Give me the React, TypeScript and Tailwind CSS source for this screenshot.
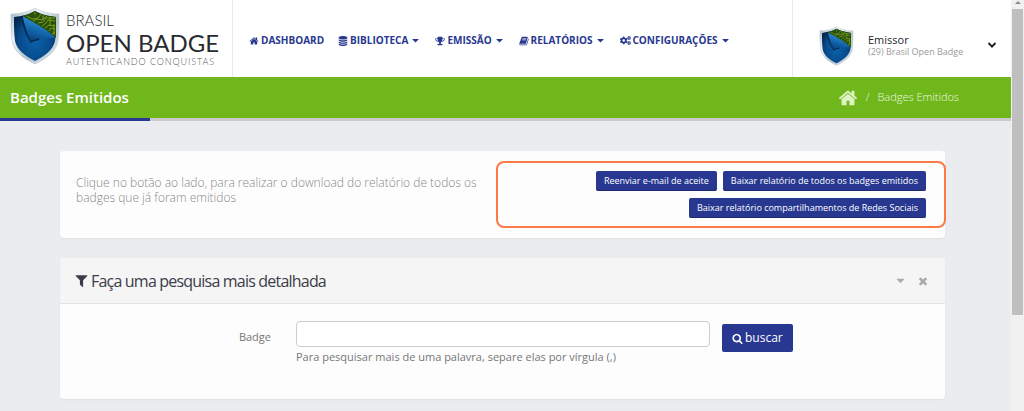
import React, { useState } from 'react';
import { FaCogs } from 'react-icons/fa';

interface IconProps {
    path: string;
    className?: string;
}

const icons = {
    home: 'M1472 992v480q0 26-19 45t-45 19h-384v-384h-256v384h-384q-26 0-45-19t-19-45v-480q0-1 .5-3t.5-3l575-474 575 474q1 2 1 6zm223-69l-62 74q-8 9-21 11h-3q-13 0-21-7l-692-577-692 577q-12 8-24 7-13-2-21-11l-62-74q-8-10-7-23.5t11-21.5l719-599q32-26 76-26t76 26l244 204v-195q0-14 9-23t23-9h192q14 0 23 9t9 23v408l219 182q10 8 11 21.5t-7 23.5z',
    database: 'M896 768q237 0 443-43t325-127v170q0 69-103 128t-280 93.5-385 34.5-385-34.5-280-93.5-103-128v-170q119 84 325 127t443 43zm0 768q237 0 443-43t325-127v170q0 69-103 128t-280 93.5-385 34.5-385-34.5-280-93.5-103-128v-170q119 84 325 127t443 43zm0-384q237 0 443-43t325-127v170q0 69-103 128t-280 93.5-385 34.5-385-34.5-280-93.5-103-128v-170q119 84 325 127t443 43zm0-1152q208 0 385 34.5t280 93.5 103 128v128q0 69-103 128t-280 93.5-385 34.5-385-34.5-280-93.5-103-128v-128q0-69 103-128t280-93.5 385-34.5z',
    trophy: 'M522 883q-74-162-74-371h-256v96q0 78 94.5 162t235.5 113zm1078-275v-96h-256q0 209-74 371 141-29 235.5-113t94.5-162zm128-128v128q0 71-41.5 143t-112 130-173 97.5-215.5 44.5q-42 54-95 95-38 34-52.5 72.5t-14.5 89.5q0 54 30.5 91t97.5 37q75 0 133.5 45.5t58.5 114.5v64q0 14-9 23t-23 9h-832q-14 0-23-9t-9-23v-64q0-69 58.5-114.5t133.5-45.5q67 0 97.5-37t30.5-91q0-51-14.5-89.5t-52.5-72.5q-53-41-95-95-113-5-215.5-44.5t-173-97.5-112-130-41.5-143v-128q0-40 28-68t68-28h288v-96q0-66 47-113t113-47h576q66 0 113 47t47 113v96h288q40 0 68 28t28 68z',
    book: 'M1703 478q40 57 18 129l-275 906q-19 64-76.5 107.5t-122.5 43.5h-923q-77 0-148.5-53.5t-99.5-131.5q-24-67-2-127 0-4 3-27t4-37q1-8-3-21.5t-3-19.5q2-11 8-21t16.5-23.5 16.5-23.5q23-38 45-91.5t30-91.5q3-10 .5-30t-.5-28q3-11 17-28t17-23q21-36 42-92t25-90q1-9-2.5-32t.5-28q4-13 22-30.5t22-22.5q19-26 42.5-84.5t27.5-96.5q1-8-3-25.5t-2-26.5q2-8 9-18t18-23 17-21q8-12 16.5-30.5t15-35 16-36 19.5-32 26.5-23.5 36-11.5 47.5 5.5l-1 3q38-9 51-9h761q74 0 114 56t18 130l-274 906q-36 119-71.5 153.5t-128.5 34.5h-869q-27 0-38 15-11 16-1 43 24 70 144 70h923q29 0 56-15.5t35-41.5l300-987q7-22 5-57 38 15 59 43zm-1064 2q-4 13 2 22.5t20 9.5h608q13 0 25.5-9.5t16.5-22.5l21-64q4-13-2-22.5t-20-9.5h-608q-13 0-25.5 9.5t-16.5 22.5zm-83 256q-4 13 2 22.5t20 9.5h608q13 0 25.5-9.5t16.5-22.5l21-64q4-13-2-22.5t-20-9.5h-608q-13 0-25.5 9.5t-16.5 22.5z',
    caret: 'M1408 704q0 26-19 45l-448 448q-19 19-45 19t-45-19l-448-448q-19-19-19-45t19-45 45-19h896q26 0 45 19t19 45z',
    filter: 'M1595 295q17 41-14 70l-493 493v742q0 42-39 59-13 5-25 5-27 0-45-19l-256-256q-19-19-19-45v-486l-493-493q-31-29-14-70 17-39 59-39h1280q42 0 59 39z',
    times: 'M1490 1322q0 40-28 68l-136 136q-28 28-68 28t-68-28l-294-294-294 294q-28 28-68 28t-68-28l-136-136q-28-28-28-68t28-68l294-294-294-294q-28-28-28-68t28-68l136-136q28-28 68-28t68 28l294 294 294-294q28-28 68-28t68 28l136 136q28 28 28 68t-28 68l-294 294 294 294q28 28 28 68z',
    search: 'M1216 832q0-185-131.5-316.5t-316.5-131.5-316.5 131.5-131.5 316.5 131.5 316.5 316.5 131.5 316.5-131.5 131.5-316.5zm512 832q0 52-38 90t-90 38q-54 0-90-38l-343-342q-179 124-399 124-143 0-273.5-55.5t-225-150-150-225-55.5-273.5 55.5-273.5 150-225 225-150 273.5-55.5 273.5 55.5 225 150 150 225 55.5 273.5q0 220-124 399l343 343q37 37 37 90z',
};

function Icon({ path, className }: IconProps) {
    return (
        <svg viewBox="0 0 1792 1792" fill="currentColor" aria-hidden="true" className={className}>
            <path d={path} />
        </svg>
    );
}

function Shield({ id, className }: { id: string; className?: string }) {
    return (
        <svg viewBox="0 0 50 58" aria-hidden="true" className={className}>
            <defs>
                <linearGradient id={`${id}-rim`} x1="0" y1="0" x2="1" y2="1">
                    <stop offset="0" stopColor="#9db0bb" />
                    <stop offset="0.3" stopColor="#eef4f7" />
                    <stop offset="0.6" stopColor="#b4c5ce" />
                    <stop offset="1" stopColor="#dfe8ed" />
                </linearGradient>
                <radialGradient id={`${id}-blue`} cx="0.5" cy="0.6" r="0.6">
                    <stop offset="0" stopColor="#0a62ad" />
                    <stop offset="0.65" stopColor="#074a8a" />
                    <stop offset="1" stopColor="#05284f" />
                </radialGradient>
                <linearGradient id={`${id}-fold`} x1="0.7" y1="0.2" x2="0.35" y2="1">
                    <stop offset="0" stopColor="#2f97dc" />
                    <stop offset="0.5" stopColor="#1467ae" />
                    <stop offset="1" stopColor="#07407c" />
                </linearGradient>
            </defs>
            <path d="M25 1C18 5 10 7 1 7c0 10 0 19 1 27 2 11 12 18 23 23 11-5 21-12 23-23 1-8 1-17 1-27-9 0-17-2-24-6z" fill={`url(#${id}-rim)`} stroke="#b7c6ce" strokeWidth="0.6" />
            <path d="M25 4C18 8 11 9 4 10c0 8 0 17 1 24 2 9 10 15 20 20 10-5 18-11 20-20 1-7 1-16 1-24-7-1-14-2-21-6z" fill={`url(#${id}-blue)`} />
            <path d="M25 4c-4 2-8 4-13 5L46 31c0-7 0-14 0-21-7-1-14-2-21-6z" fill="#2b4f0c" />
            <g fill="none" stroke="#7da91e" strokeWidth="0.9">
                <path d="M17 9l5 3 6-1 3-4M23 14l4-2 5 1 5-4M28 16l5-1 3-4h9M32 19l4-3 2-3 7 1M35 21l4-3 6 1M39 24l2-3 4 1M42 27l3-2" />
                <path d="M25 5v3M33 8v5M40 10v9M44 17v11" />
            </g>
            <path d="M12 9c11 6 23 12 34 22-8-1-16 1-25 4-3-8-6-17-9-26z" fill={`url(#${id}-fold)`} />
            <path d="M12 9c1 10 4 18 9 26 2-2 6-2 8-3" fill="none" stroke="#062445" strokeWidth="1.4" />
        </svg>
    );
}

const menu = [
    { label: 'DASHBOARD', icon: icons.home, dropdown: false },
    { label: 'BIBLIOTECA', icon: icons.database, dropdown: true },
    { label: 'EMISSÃO', icon: icons.trophy, dropdown: true },
    { label: 'RELATÓRIOS', icon: icons.book, dropdown: true },
    { label: 'CONFIGURAÇÕES', icon: null, dropdown: true },
];

const actionClass = 'h-5 cursor-pointer rounded-xs border-b border-[#1d2870] bg-[#283891] px-2 text-[9px] leading-[18px] text-white hover:bg-[#1f2c78]';

function Header() {
    return (
        <header className="flex h-[77px] items-stretch bg-white">
            <a href="#" className="flex w-[233px] shrink-0 items-start border-r border-[#e9e9ec] pt-[7px] pl-[10px]">
                <Shield id="logo" className="h-[58px] w-[50px] shrink-0" />
                <span className="flex flex-col pt-1 pl-[6px] font-['Lato'] whitespace-nowrap text-[#2b2b2f]">
                    <span className="text-[15px] leading-[18px] font-light">BRASIL</span>
                    <span className="text-[24px] leading-[28px]">OPEN BADGE</span>
                    <span className="text-[9px] leading-[10px] font-light tracking-widest text-[#55555a]">AUTENTICANDO CONQUISTAS</span>
                </span>
            </a>
            <nav className="flex flex-1 items-center gap-[14px] pt-1 pl-4">
                {menu.map((item) => (
                    <a key={item.label} href="#" className="flex items-center gap-[2px] text-[10px] font-bold whitespace-nowrap text-[#283891]">
                        {item.icon ? <Icon path={item.icon} className="size-[10px]" /> : <FaCogs className="size-[11px]" />}
                        {item.label}
                        {item.dropdown && <Icon path={icons.caret} className="size-[11px]" />}
                    </a>
                ))}
            </nav>
            <div className="flex w-[219px] shrink-0 items-center border-l border-[#e9e9ec] pt-[14px] pr-[14px] pl-[26px]">
                <Shield id="user" className="h-10 w-[35px] shrink-0" />
                <div className="flex-1 pl-[14px] whitespace-nowrap">
                    <div className="text-[11px] leading-[13px] text-[#22252d]">Emissor</div>
                    <div className="text-[9px] leading-[12px] text-[#999]">(29) Brasil Open Badge</div>
                </div>
                <button type="button" aria-label="Abrir menu do usuário" className="cursor-pointer">
                    <svg viewBox="0 0 10 10" aria-hidden="true" className="size-[10px]">
                        <path d="M1.5 2l3.5 3.5L8.5 2" fill="none" stroke="#22252d" strokeWidth="2" />
                    </svg>
                </button>
            </div>
        </header>
    );
}

export default function App() {
    const [badge, setBadge] = useState('');

    return (
        <div className="flex min-h-screen bg-[#ebecf0] font-['Open_Sans',sans-serif]">
            <div className="min-w-0 flex-1">
                <Header />

                <div className="flex h-[41px] items-center justify-between bg-[#6fb71b] pr-[52px] pl-[10px] text-white">
                    <h1 className="text-[15px] font-semibold">Badges Emitidos</h1>
                    <div className="flex items-center gap-2 text-[11px] font-light text-[#eef8e0]">
                        <a href="#" aria-label="Início" className="text-[#dff2c6]"><Icon path={icons.home} className="size-5" /></a>
                        <span>/</span>
                        <span>Badges Emitidos</span>
                    </div>
                </div>
                <div className="h-[3px] bg-[#cacacd]">
                    <div className="h-full w-[150px] bg-[#283891]"></div>
                </div>

                <main className="flex flex-col gap-5 pt-[30px] pr-[66px] pb-3 pl-[60px]">
                    <section className="flex items-start justify-between rounded-sm bg-[#fdfdfd] py-[10px] pl-4 shadow-xs">
                        <p className="w-[410px] pt-[14px] text-[12px] leading-[15px] font-light text-[#888]">
                            Clique no botão ao lado, para realizar o download do relatório de todos os badges que já foram emitidos
                        </p>
                        <div className="-mr-px flex w-[450px] flex-wrap justify-end gap-x-[6px] gap-y-[7px] rounded-lg border-2 border-[#fb7a48] px-[18px] py-2">
                            <button type="button" className={actionClass}>Reenviar e-mail de aceite</button>
                            <button type="button" className={actionClass}>Baixar relatório de todos os badges emitidos</button>
                            <button type="button" className={actionClass}>Baixar relatório compartilhamentos de Redes Sociais</button>
                        </div>
                    </section>

                    <section className="rounded-sm bg-[#fdfdfd] shadow-xs">
                        <div className="flex h-[46px] items-center justify-between rounded-t-sm border-b border-[#e2e2e2] bg-[#f5f5f5] pr-4 pl-[14px]">
                            <h2 className="flex items-center gap-[2px] text-base tracking-tighter text-[#3b3c48]">
                                <Icon path={icons.filter} className="size-[15px]" />
                                Faça uma pesquisa mais detalhada
                            </h2>
                            <div className="flex items-center gap-[10px] text-[#aaa]">
                                <button type="button" aria-label="Recolher" className="cursor-pointer"><Icon path={icons.caret} className="size-[13px]" /></button>
                                <button type="button" aria-label="Fechar" className="cursor-pointer"><Icon path={icons.times} className="size-3" /></button>
                            </div>
                        </div>
                        <form className="flex items-start pt-[17px] pb-[34px] text-[#777]" onSubmit={(e) => e.preventDefault()}>
                            <label htmlFor="badge" className="w-[211px] pt-2 text-right text-[11px] leading-[16px]">Badge</label>
                            <div className="ml-[25px] w-[414px]">
                                <input
                                    id="badge"
                                    type="text"
                                    value={badge}
                                    onChange={(e) => setBadge(e.target.value)}
                                    className="block h-[26px] w-full rounded-sm border border-[#ccc] bg-white px-2 text-[11px] outline-none focus:border-[#283891]"
                                />
                                <p className="pt-[2px] text-[11px] leading-[16px]">Para pesquisar mais de uma palavra, separe elas por vírgula (,)</p>
                            </div>
                            <button type="submit" className="mt-[3px] ml-3 flex h-7 cursor-pointer items-center gap-[2px] rounded-xs bg-[#283891] px-[10px] text-[12px] text-white hover:bg-[#1f2c78]">
                                <Icon path={icons.search} className="size-[11px]" />
                                buscar
                            </button>
                        </form>
                    </section>
                </main>
            </div>

            {/* trilho de rolagem */}
            <div aria-hidden="true" className="w-[13px] shrink-0 bg-[#f1f1f1]">
                <svg viewBox="0 0 13 9" className="h-[9px] w-full"><path d="M4 4l3-3 3 3z" fill="#8a8a8a" /></svg>
                <div className="mx-px h-[306px] bg-[#bfbfbf]"></div>
            </div>
        </div>
    );
}
